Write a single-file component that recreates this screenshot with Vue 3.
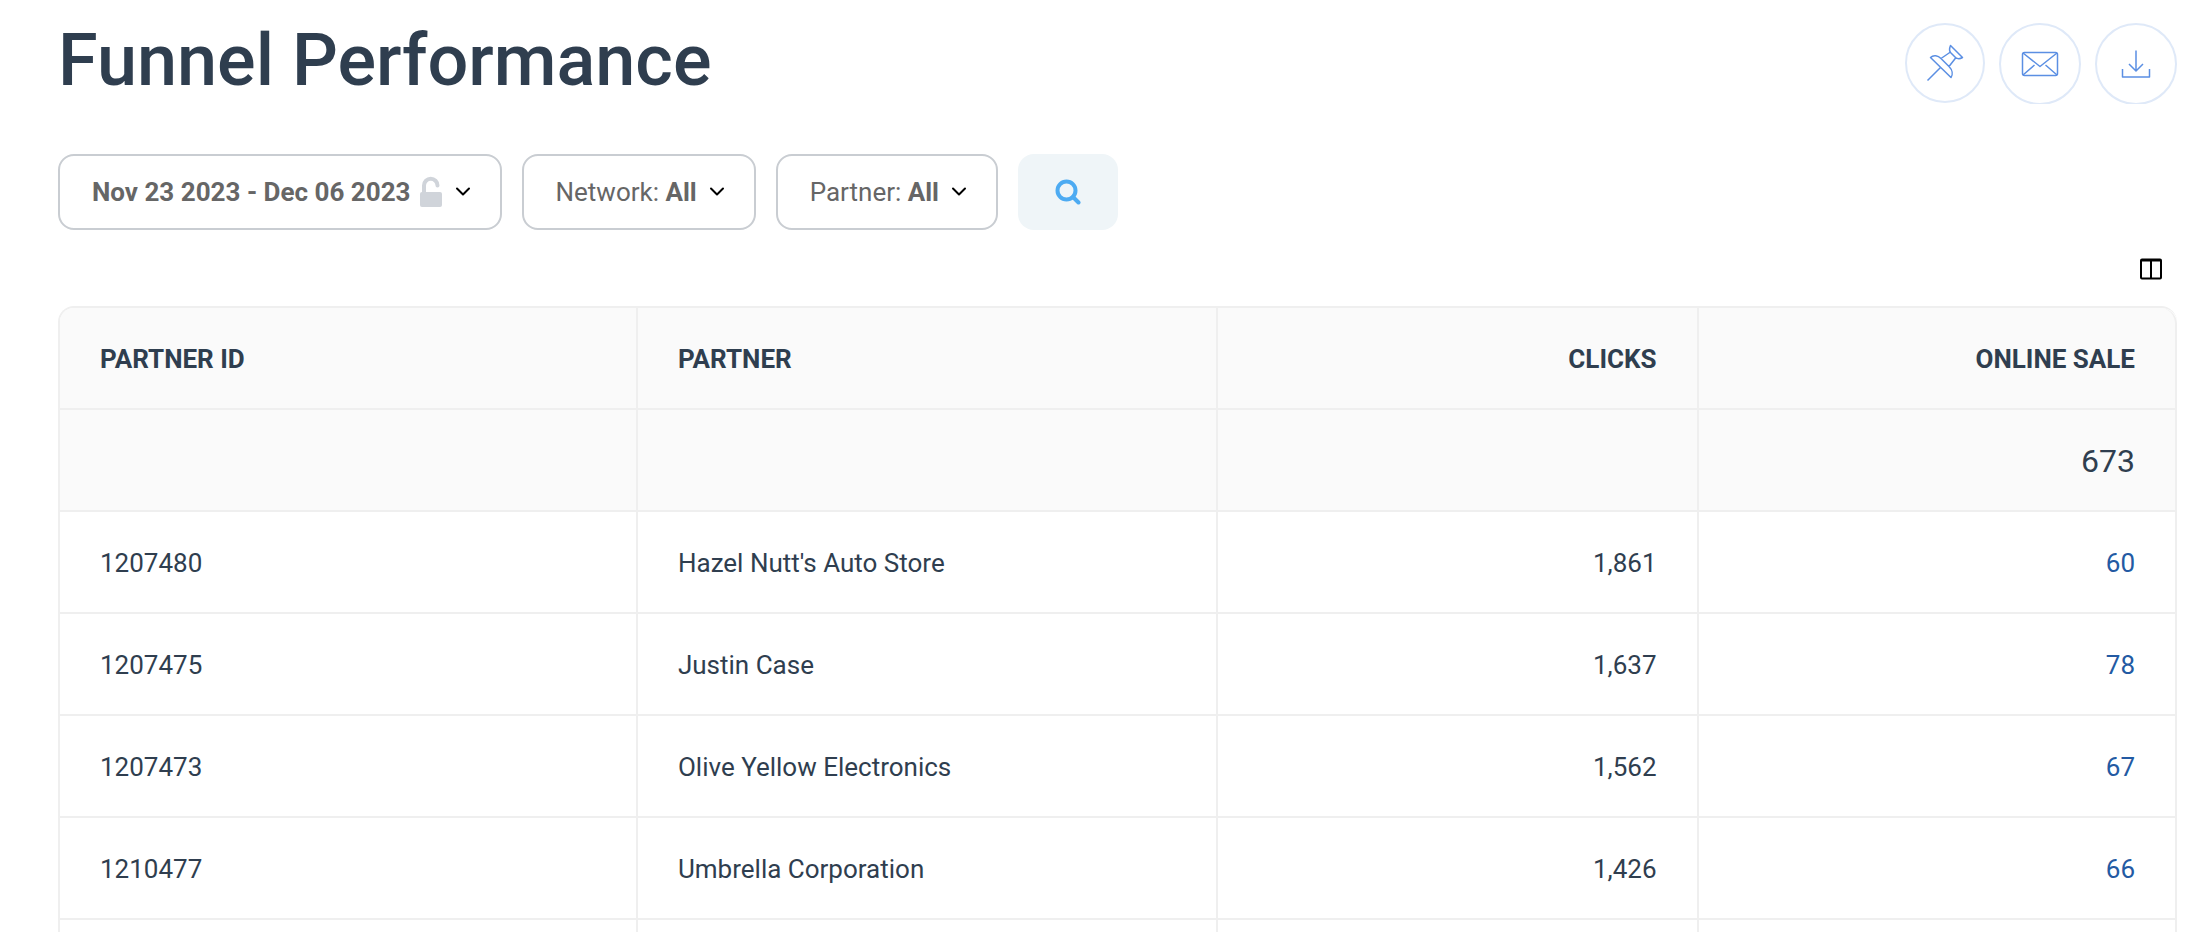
<script setup>
const filters = [
  { label: 'Network:', value: 'All' },
  { label: 'Partner:', value: 'All' },
]

const rows = [
  { id: '1207480', partner: "Hazel Nutt's Auto Store", clicks: '1,861', sales: '60' },
  { id: '1207475', partner: 'Justin Case', clicks: '1,637', sales: '78' },
  { id: '1207473', partner: 'Olive Yellow Electronics', clicks: '1,562', sales: '67' },
  { id: '1210477', partner: 'Umbrella Corporation', clicks: '1,426', sales: '66' },
]
</script>

<template>
  <main class="page">
    <header class="header">
      <h1>Funnel Performance</h1>
      <div class="actions">
        <button class="round small" type="button" aria-label="Pin">
          <svg width="38" height="38" viewBox="0 0 38 38">
            <path d="M1.5 36.5 14.5 23.5M4.5 13.5C7.5 10.5 12 11.5 15 14.5L23 22.5C26.5 26 27 30.5 25 33.5ZM15 14.5 24.5 8M23 22.5 30 13.5M24.5 1.5 36.5 13.5C34 15 31.5 15 29.5 13.5L24.5 8.5C23 6.5 23.5 4 24.5 1.5Z" />
          </svg>
        </button>
        <button class="round" type="button" aria-label="Email">
          <svg width="38" height="26" viewBox="0 0 38 26">
            <rect x="1.5" y="1.5" width="35" height="23" rx="2" />
            <path d="M2 2 19 15.5 36 2M2 24 13.5 14M36 24 24.5 14" />
          </svg>
        </button>
        <button class="round" type="button" aria-label="Download">
          <svg width="30" height="30" viewBox="0 0 30 30">
            <path d="M15 1.5V22M8 15 15 22 22 15M1.5 20V28H28.5V20" />
          </svg>
        </button>
      </div>
    </header>

    <div class="filters">
      <button class="filter" type="button">
        <b>Nov 23 2023 - Dec 06 2023</b>
        <svg class="lock" width="24" height="32" viewBox="0 0 24 32">
          <path class="shackle" d="M5 17V9.5A6.5 6.5 0 0 1 18.5 9.5" />
          <rect x="1" y="16" width="22" height="15" rx="2" />
        </svg>
        <svg class="chevron" width="16" height="10" viewBox="0 0 16 10"><path d="M2 1.5 8 7.5 14 1.5" /></svg>
      </button>
      <button v-for="f in filters" :key="f.label" class="filter" type="button">
        <span>{{ f.label }} <b>{{ f.value }}</b></span>
        <svg class="chevron" width="16" height="10" viewBox="0 0 16 10"><path d="M2 1.5 8 7.5 14 1.5" /></svg>
      </button>
      <button class="search" type="button" aria-label="Search">
        <svg width="26" height="26" viewBox="0 0 26 26">
          <circle cx="11.5" cy="11.5" r="9" />
          <path d="M18 18 23.5 23.5" />
        </svg>
      </button>
    </div>

    <div class="toolbar">
      <button class="columns" type="button" aria-label="Choose columns">
        <svg width="24" height="22" viewBox="0 0 24 22">
          <rect x="2" y="1.5" width="20" height="19" rx="1" />
          <path d="M2 2.5H22M12 2V20" />
        </svg>
      </button>
    </div>

    <table class="report">
      <colgroup>
        <col class="id" />
        <col class="partner" />
        <col class="clicks" />
        <col />
      </colgroup>
      <thead>
        <tr>
          <th scope="col">PARTNER ID</th>
          <th scope="col">PARTNER</th>
          <th scope="col" class="num">CLICKS</th>
          <th scope="col" class="num">ONLINE SALE</th>
        </tr>
        <tr class="total">
          <td></td>
          <td></td>
          <td></td>
          <td class="num">673</td>
        </tr>
      </thead>
      <tbody>
        <tr v-for="r in rows" :key="r.id">
          <td>{{ r.id }}</td>
          <td>{{ r.partner }}</td>
          <td class="num">{{ r.clicks }}</td>
          <td class="num"><a href="#">{{ r.sales }}</a></td>
        </tr>
        <tr>
          <td></td>
          <td></td>
          <td></td>
          <td></td>
        </tr>
      </tbody>
    </table>
  </main>
</template>

<style>
body {
  margin: 0;
  background: #fff;
}
</style>

<style scoped>
.page {
  box-sizing: border-box;
  height: 100vh;
  overflow: hidden;
  padding: 23px 21px 0 58px;
  font-family: Roboto, "Liberation Sans", sans-serif;
  font-size: 26px;
  line-height: 32px;
  color: #2f3e4f;
}
button {
  box-sizing: border-box;
  padding: 0;
  font: inherit;
  background: none;
  border: 0;
  cursor: pointer;
}
svg {
  display: block;
  flex: none;
  fill: none;
}
.header {
  display: flex;
  justify-content: space-between;
  align-items: flex-start;
  height: 131px;
}
h1 {
  margin: 0;
  font-size: 72px;
  line-height: 76px;
  font-weight: 500;
}
.actions {
  display: flex;
  gap: 14px;
  height: 81px;
  overflow: hidden;
}
.round {
  display: flex;
  align-items: center;
  justify-content: center;
  width: 82px;
  height: 82px;
  border: 2px solid #dfe9f8;
  border-radius: 50%;
}
.round.small {
  width: 80px;
  height: 80px;
}
.round svg {
  stroke: #5b8fe3;
  stroke-width: 1.5;
  stroke-linejoin: round;
}
.filters {
  display: flex;
  gap: 20px;
}
.filter {
  display: flex;
  align-items: center;
  height: 76px;
  padding: 0 29px 0 32px;
  border: 2px solid #c9cdd2;
  border-radius: 16px;
  color: #666;
  white-space: nowrap;
}
.filter b {
  font-weight: 700;
}
.lock {
  margin-left: 8px;
  fill: #d0d4da;
}
.shackle {
  fill: none;
  stroke: #d0d4da;
  stroke-width: 4;
  stroke-linecap: round;
}
.chevron {
  margin-left: 12px;
  stroke: #000;
  stroke-width: 2;
  stroke-linecap: round;
  stroke-linejoin: round;
}
.search {
  display: flex;
  align-items: center;
  justify-content: center;
  width: 100px;
  height: 76px;
  border-radius: 16px;
  background: #eff5f8;
}
.search svg {
  stroke: #4dabf2;
  stroke-width: 4;
  stroke-linecap: round;
}
.toolbar {
  display: flex;
  justify-content: flex-end;
  align-items: center;
  height: 76px;
  padding: 2px 14px 0 0;
  box-sizing: border-box;
}
.columns svg {
  stroke: #000;
  stroke-width: 2;
}
.report {
  width: 100%;
  table-layout: fixed;
  border-collapse: separate;
  border-spacing: 0;
  border: solid #efefef;
  border-width: 2px 0 0 2px;
  border-radius: 16px 16px 0 0;
  overflow: hidden;
}
.id {
  width: 27.3%;
}
.partner {
  width: 27.4%;
}
.clicks {
  width: 22.7%;
}
th,
td {
  box-sizing: border-box;
  height: 102px;
  padding: 2px 40px 0;
  border: solid #efefef;
  border-width: 0 2px 2px 0;
  text-align: left;
}
th {
  font-weight: 700;
}
thead th,
thead td {
  background: #fafafa;
}
thead th:last-child {
  border-top-right-radius: 16px;
}
.num {
  text-align: right;
}
.total td {
  font-size: 32px;
}
a {
  color: #235aa3;
  text-decoration: none;
}
</style>
